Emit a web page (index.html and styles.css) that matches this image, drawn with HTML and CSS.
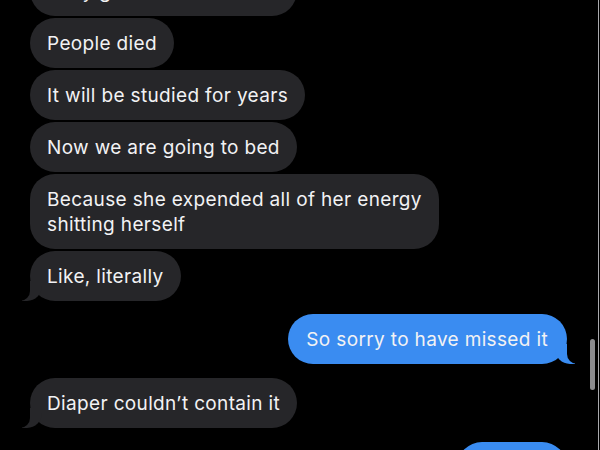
FILE: index.html
```html
<!DOCTYPE html>
<html lang="en">
<head>
<meta charset="utf-8">
<title>Messages</title>
<link rel="stylesheet" href="styles.css">
</head>
<body>
<div class="screen">
  <div class="thread">
    <div class="msg them first">Baby got sick all over me</div>
    <div class="msg them">People died</div>
    <div class="msg them">It will be studied for years</div>
    <div class="msg them">Now we are going to bed</div>
    <div class="msg them">Because she expended all of her energy<br>shitting herself</div>
    <div class="msg them tail">Like, literally</div>
    <div class="msg me tail group">So sorry to have missed it</div>
    <div class="msg them tail group wide">Diaper couldn’t contain it</div>
    <div class="msg me group wide">Oh no!!!</div>
  </div>
  <div class="scrollbar"></div>
  <div class="edge"></div>
</div>
</body>
</html>
```
FILE: styles.css
```css
html, body {
  margin: 0;
  padding: 0;
  background: #000;
}
.screen {
  position: relative;
  width: 600px;
  height: 450px;
  overflow: hidden;
  background: #000;
  font-family: Inter, "Liberation Sans", sans-serif;
}
.thread {
  display: flex;
  flex-direction: column;
  gap: 2px;
}
.msg {
  position: relative;
  box-sizing: border-box;
  padding: 12.5px 17px;
  font-size: 19px;
  line-height: 25px;
  letter-spacing: 0.35px;
  color: #f2f2f4;
  border-radius: 25px;
  white-space: nowrap;
}
.msg.first {
  margin-top: -34px;
}
.them {
  align-self: flex-start;
  margin-left: 30px;
  background: #262629;
}
.me {
  align-self: flex-end;
  margin-right: 33px;
  background: #3a8cf1;
  padding-left: 18px;
  padding-right: 19px;
}
.group {
  margin-top: 11px;
}
.group.wide {
  margin-top: 12px;
}
.them.tail::before {
  content: "";
  position: absolute;
  bottom: 0;
  left: -8px;
  width: 20px;
  height: 20px;
  background: #262629;
  border-bottom-right-radius: 15px;
}
.them.tail::after {
  content: "";
  position: absolute;
  bottom: 0;
  left: -10px;
  width: 10px;
  height: 20px;
  background: #000;
  border-bottom-right-radius: 10px;
}
.me.tail::before {
  content: "";
  position: absolute;
  bottom: 0;
  right: -8px;
  width: 20px;
  height: 20px;
  background: #3a8cf1;
  border-bottom-left-radius: 15px;
}
.me.tail::after {
  content: "";
  position: absolute;
  bottom: 0;
  right: -10px;
  width: 10px;
  height: 20px;
  background: #000;
  border-bottom-left-radius: 10px;
}
.scrollbar {
  position: absolute;
  left: 590px;
  top: 339px;
  width: 5px;
  height: 51px;
  border-radius: 3px;
  background: #8b8b8e;
}
.edge {
  position: absolute;
  top: 0;
  right: 1px;
  width: 1px;
  height: 450px;
  background: #a9a9ad;
}
```
